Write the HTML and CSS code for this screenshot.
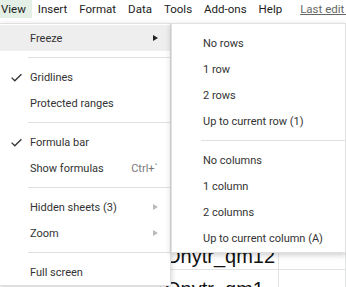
FILE: index.html
```html
<!DOCTYPE html>
<html lang="en">
  <head>
    <meta charset="UTF-8" />
    <title>Sheet - View menu</title>
    <link rel="stylesheet" href="styles.css">
  </head>
  <body>
    <div class="menubar">
      <span class="menubar-item active">View</span>
      <span class="menubar-item">Insert</span>
      <span class="menubar-item">Format</span>
      <span class="menubar-item">Data</span>
      <span class="menubar-item">Tools</span>
      <span class="menubar-item">Add-ons</span>
      <span class="menubar-item">Help</span>
      <span class="last-edit">Last edit was seconds ago</span>
    </div>

    <div class="sheet">
      <div class="filler"></div>
      <div class="cell"></div>
      <div class="cell text">Ohytr_qm12</div>
      <div class="cell"></div>
      <div class="cell"></div>
      <div class="cell text low">Onvtr_qm1</div>
      <div class="cell"></div>
    </div>

    <div class="menu main-menu">
      <div class="item hover">
        <span class="icon"></span>
        <span class="label">Freeze</span>
        <span class="arrow"></span>
      </div>
      <div class="separator"></div>
      <div class="item">
        <span class="icon">
          <svg width="11" height="9" viewBox="0 0 11 9"><path d="M0.6 4.6 L3.8 7.8 L10.4 1.2" fill="none" stroke="#333" stroke-width="1.3"/></svg>
        </span>
        <span class="label">Gridlines</span>
      </div>
      <div class="item">
        <span class="icon"></span>
        <span class="label">Protected ranges</span>
      </div>
      <div class="separator"></div>
      <div class="item">
        <span class="icon">
          <svg width="11" height="9" viewBox="0 0 11 9"><path d="M0.6 4.6 L3.8 7.8 L10.4 1.2" fill="none" stroke="#333" stroke-width="1.3"/></svg>
        </span>
        <span class="label">Formula bar</span>
      </div>
      <div class="item">
        <span class="icon"></span>
        <span class="label">Show formulas</span>
        <span class="shortcut">Ctrl+`</span>
      </div>
      <div class="separator"></div>
      <div class="item">
        <span class="icon"></span>
        <span class="label">Hidden sheets (3)</span>
        <span class="arrow dim"></span>
      </div>
      <div class="item">
        <span class="icon"></span>
        <span class="label">Zoom</span>
        <span class="arrow dim"></span>
      </div>
      <div class="separator"></div>
      <div class="item">
        <span class="icon"></span>
        <span class="label">Full screen</span>
      </div>
    </div>

    <div class="menu sub-menu">
      <div class="item"><span class="label">No rows</span></div>
      <div class="item"><span class="label">1 row</span></div>
      <div class="item"><span class="label">2 rows</span></div>
      <div class="item"><span class="label">Up to current row (1)</span></div>
      <div class="separator"></div>
      <div class="item"><span class="label">No columns</span></div>
      <div class="item"><span class="label">1 column</span></div>
      <div class="item"><span class="label">2 columns</span></div>
      <div class="item"><span class="label">Up to current column (A)</span></div>
    </div>
  </body>
</html>
```

FILE: styles.css
```css
body {
  background-color: #fff;
  color: #222;
  font-family: Roboto, "Liberation Sans", sans-serif;
  height: 287px;
  margin: 0;
  overflow: hidden;
  position: relative;
  width: 346px;
}

.menubar {
  align-items: center;
  display: flex;
  font-size: 11.5px;
  height: 18px;
  margin-left: -5px;
  white-space: nowrap;
}

.menubar-item {
  color: #222;
  line-height: 18px;
  padding: 0 6px;
}

.menubar-item.active {
  background-color: #e4f0e5;
}

.last-edit {
  color: #666;
  margin-left: 12px;
  text-decoration: underline;
}

.sheet {
  display: grid;
  font-family: "Liberation Sans", Arial, sans-serif;
  font-size: 20px;
  grid-template-columns: 161px 118px 1fr;
  grid-template-rows: 226px 26px 26px;
}

.filler {
  grid-column: 1 / 4;
}

.cell {
  border-bottom: 1px solid #e2e3e3;
  border-right: 1px solid #e2e3e3;
  color: #111;
  line-height: 25px;
  overflow: hidden;
  white-space: nowrap;
}

.cell.text {
  padding-left: 4px;
}

.cell.low {
  padding-top: 7px;
}

.menu {
  background-color: #fff;
  border: 1px solid rgba(0, 0, 0, 0.12);
  box-shadow: 0 2px 6px rgba(0, 0, 0, 0.2);
  color: #333;
  font-size: 11px;
  position: absolute;
  top: 23px;
}

.main-menu {
  border-left: none;
  left: 0;
  padding-top: 1px;
  width: 170px;
}

.sub-menu {
  left: 171px;
  padding: 6px 0 1px;
  width: 173px;
}

.item {
  align-items: center;
  display: flex;
  height: 26px;
  padding-right: 12px;
}

.item.hover {
  background-color: #eeeeee;
}

.icon {
  display: flex;
  flex-shrink: 0;
  padding-left: 11px;
  width: 19px;
}

.sub-menu .item {
  padding-left: 31px;
}

.label {
  flex: 1;
  white-space: nowrap;
}

.shortcut {
  color: #777;
}

.arrow {
  border-bottom: 3px solid transparent;
  border-left: 5px solid #222;
  border-top: 3px solid transparent;
  height: 0;
  width: 0;
}

.arrow.dim {
  border-left-color: #bbb;
}

.separator {
  border-top: 1px solid #e0e0e0;
  margin: 6px 0 6px 28px;
}

.sub-menu .separator {
  margin-left: 29px;
}
```
